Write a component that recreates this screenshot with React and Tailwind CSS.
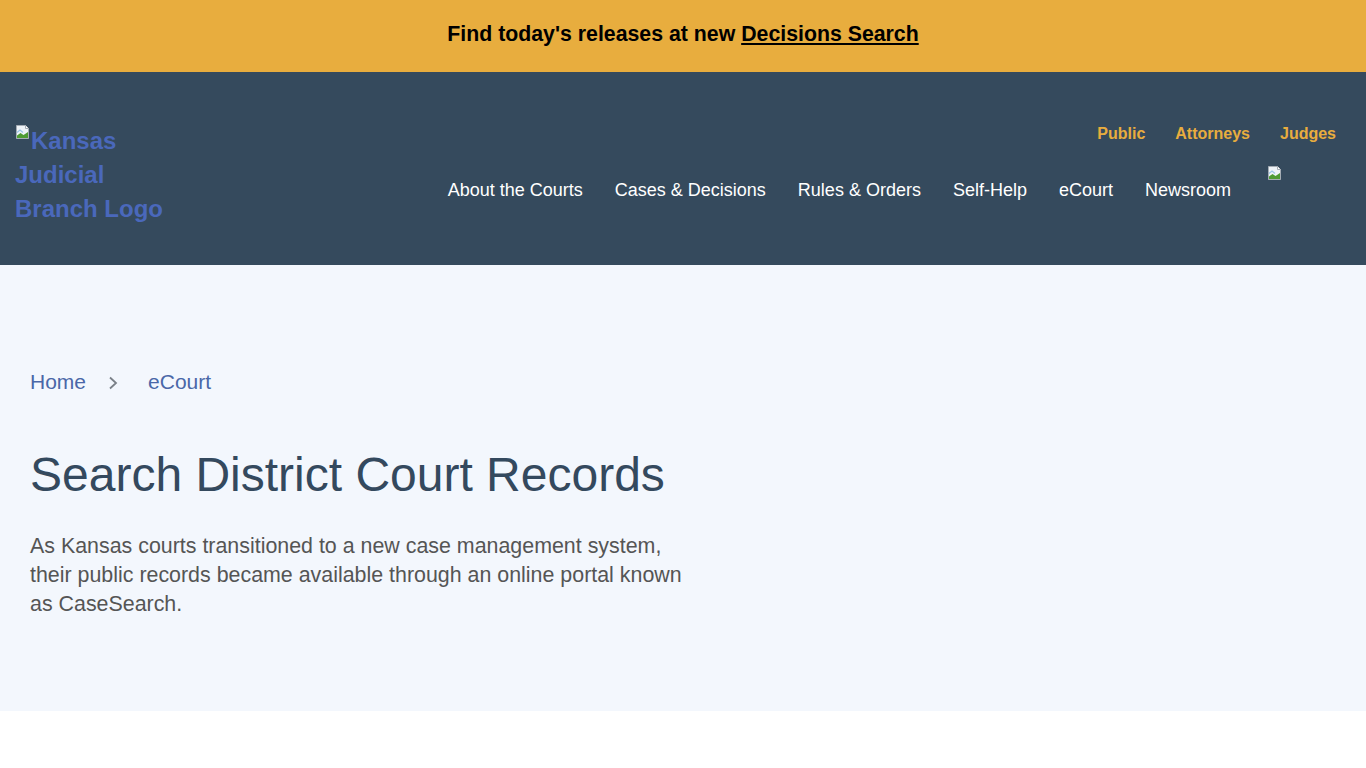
import React from 'react';

const BrokenImage = () => (
  <svg width="16" height="16" viewBox="0 0 16 16" className="inline-block align-top">
    <path d="M1.5 1.5h9l3 3v10h-12z" fill="#eef3f8" stroke="#a4acb4" />
    <path d="M2 8.5l3-2.5 3 2.5" fill="none" stroke="#9cc4e8" strokeWidth="1.2" />
    <path d="M2 14V11.5l3.5-2.5 3 2 4.5-3v6z" fill="#4e9b34" />
    <path d="M10.5 1.5v3h3" fill="#ffffff" stroke="#a4acb4" />
  </svg>
);

export default function App() {
  const nav = ['About the Courts', 'Cases & Decisions', 'Rules & Orders', 'Self-Help', 'eCourt', 'Newsroom'];
  return (
    <div className="min-h-screen bg-white font-['Liberation_Sans',Arial,sans-serif]">
      {/* announcement */}
      <div className="h-[72px] bg-[#e8ad3e] flex items-center justify-center pb-[3px]">
        <p className="text-[21.3px] font-bold text-black">
          Find today's releases at new <a href="#" className="underline">Decisions Search</a>
        </p>
      </div>

      {/* header */}
      <header className="h-[193px] bg-[#354a5d] flex items-start justify-between pl-[15px] pr-[30px]">
        <a href="#" className="block w-[160px] mt-[52px] text-[24px] leading-[34px] font-bold text-[#4a68bb]">
          <BrokenImage />Kansas Judicial Branch Logo
        </a>
        <div className="flex flex-col items-end pt-[50px]">
          <div className="flex gap-[30px] text-[16px] leading-[24px] font-bold text-[#e8ad3e] mb-[31px]">
            <a href="#">Public</a>
            <a href="#">Attorneys</a>
            <a href="#">Judges</a>
          </div>
          <div className="flex items-start -mr-[12px]">
            <nav className="flex gap-[32px] text-[18px] leading-[27px] text-white">
              {nav.map((n) => (
                <a key={n} href="#">{n}</a>
              ))}
            </nav>
            <div className="w-[81px] h-[28px] ml-[36px] -mt-[12px]">
              <BrokenImage />
            </div>
          </div>
        </div>
      </header>

      {/* hero */}
      <main className="bg-[#f3f7fd] h-[446px] px-[30px] pt-[101px]">
        <div className="flex items-center text-[21px] text-[#4a67a8]">
          <a href="#">Home</a>
          <svg width="12" height="16" viewBox="0 0 12 16" className="ml-[21px] mt-[3px]">
            <path d="M3 2.5l6 5.5-6 5.5" fill="none" stroke="#7a8088" strokeWidth="1.8" />
          </svg>
          <a href="#" className="ml-[29px]">eCourt</a>
        </div>
        <h1 className="mt-[48px] text-[48px] leading-[58px] text-[#34495e]">Search District Court Records</h1>
        <p className="mt-[28px] w-[668px] text-[21.4px] leading-[29px] text-[#555555]">
          As Kansas courts transitioned to a new case management system, their public records became available through an online portal known as CaseSearch.
        </p>
      </main>
    </div>
  );
}
